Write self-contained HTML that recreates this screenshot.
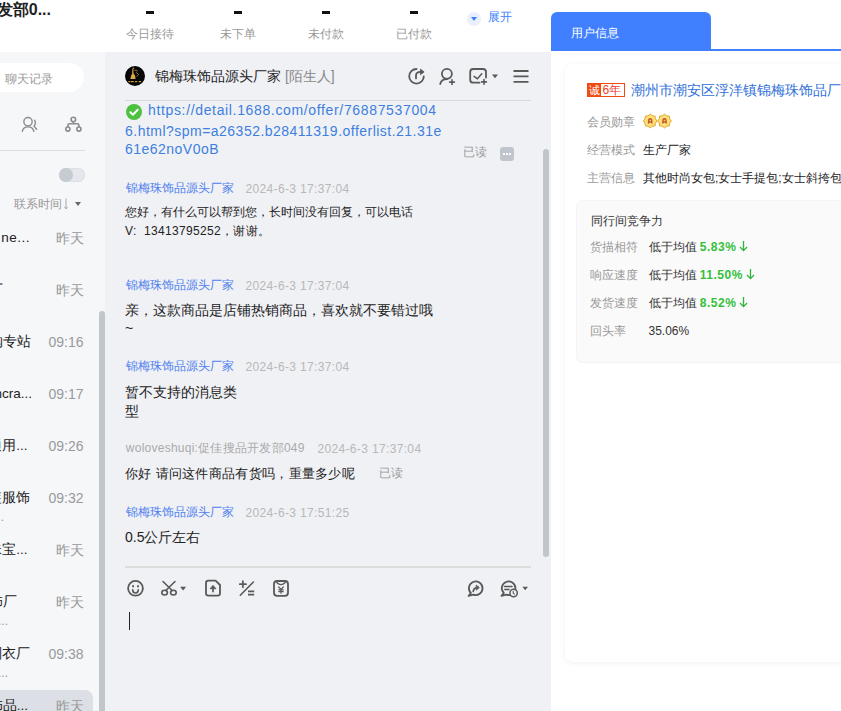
<!DOCTYPE html>
<html><head><meta charset="utf-8">
<style>
*{margin:0;padding:0;box-sizing:border-box}
html,body{width:841px;height:711px;overflow:hidden;background:#fff;font-family:"Liberation Sans",sans-serif;color:#333}
.a{position:absolute;white-space:nowrap}
#hdr{position:absolute;left:0;top:0;width:841px;height:52px;background:#fff}
#left{position:absolute;left:0;top:52px;width:105px;height:659px;background:#f6f7f9;overflow:hidden}
#mid{position:absolute;left:105px;top:52px;width:446px;height:659px;background:#f0f1f5;overflow:hidden}
#right{position:absolute;left:551px;top:51px;width:290px;height:660px;background:#fff;overflow:hidden}
.dash{position:absolute;width:8px;height:3px;background:#111;top:11px}
.lbl{font-size:12px;color:#999;line-height:16px;top:26px;text-align:center;width:60px}
.sender{font-size:12px;color:#4f80ee;line-height:16px}
.time{font-size:12px;color:#b8b8b8;line-height:16px;letter-spacing:.35px;margin-top:1px}
.msg{font-size:12px;color:#222;line-height:18px}
.msg14{font-size:14px;color:#222;line-height:20px}
.msg13{font-size:13px;color:#222;line-height:20px}
.url{font-size:14px;line-height:20px;color:#3d7fe0;letter-spacing:.48px}
.rl{left:36.4px;font-size:12px;line-height:16px;color:#999}
.rv{left:92px;font-size:12px;line-height:16px;color:#222}
.cl{left:39.3px;font-size:12px;line-height:16px;color:#999}
.cv{left:97.5px;font-size:12px;line-height:16px;color:#333}
.cv b{color:#33c13b;letter-spacing:.5px}
.item-t{font-size:14px;color:#999;line-height:18px}
.item-n{font-size:13.5px;color:#222;line-height:18px}
</style></head><body>
<div id="hdr">
  <div class="a" style="right:790px;top:0;font-size:16px;font-weight:bold;line-height:20px;color:#222">开发部0...</div>
  <div class="dash" style="left:146px"></div>
  <div class="a lbl" style="left:120px">今日接待</div>
  <div class="dash" style="left:234px"></div>
  <div class="a lbl" style="left:208px">未下单</div>
  <div class="dash" style="left:322px"></div>
  <div class="a lbl" style="left:296px">未付款</div>
  <div class="dash" style="left:410px"></div>
  <div class="a lbl" style="left:384px">已付款</div>
  <div class="a" style="left:467px;top:12px;width:14px;height:14px;border-radius:7px;background:#e9effc"></div>
  <div class="a" style="left:471px;top:17px;width:0;height:0;border-left:3px solid transparent;border-right:3px solid transparent;border-top:4px solid #4080ff"></div>
  <div class="a" style="left:488px;top:9px;font-size:12px;line-height:16px;color:#4080ff">展开</div>
  <div class="a" style="left:551px;top:12px;width:160px;height:39px;background:#4080ff;border-radius:6px 6px 0 0"></div>
  <div class="a" style="left:571px;top:25px;font-size:12px;line-height:16px;color:#fff">用户信息</div>
  <div class="a" style="left:711px;top:49px;width:130px;height:2px;background:#4080ff"></div>
</div>

<div id="left">
  <div class="a" style="left:-40px;top:11px;width:124px;height:29px;border-radius:15px;background:#fff"></div>
  <div class="a" style="left:5px;top:19px;font-size:12px;line-height:16px;color:#999">聊天记录</div>
  <div class="a" style="left:0;top:98px;width:85px;height:1px;background:#dcdde0"></div>
  <div class="a" style="left:59px;top:116px;width:26px;height:14px;border-radius:7px;background:#e5e7ec;box-shadow:inset 0 0 0 1px #dde0e5"></div>
  <div class="a" style="left:59px;top:116px;width:14px;height:14px;border-radius:7px;background:#c6cad1"></div>
  <div class="a" style="left:14px;top:144px;font-size:12px;line-height:16px;color:#999">联系时间</div>
  <svg class="a" style="left:62.6px;top:145.6px" width="6" height="12" viewBox="0 0 6 12"><path d="M3 .5v10.5M1.3 8.8l1.7 2 1.7-2" stroke="#a3a3a3" stroke-width=".95" fill="none"/></svg>
  <div class="a" style="left:75px;top:149.7px;width:0;height:0;border-left:3px solid transparent;border-right:3px solid transparent;border-top:4px solid #666"></div>
  <div class="a" style="left:-20px;top:638px;width:113px;height:60px;border-radius:8px;background:#dcdfe5"></div>
  <div class="a item-n" style="right:75px;top:177px;letter-spacing:.5px">采购商 ne...</div>
  <div class="a item-t" style="right:21.5px;top:177px">昨天</div>
  <div class="a item-n" style="right:102.0px;top:229px">丅</div>
  <div class="a item-t" style="right:21.5px;top:229px">昨天</div>
  <div class="a item-n" style="right:74.4px;top:281px">中国采购专站</div>
  <div class="a item-t" style="right:21.5px;top:281px">09:16</div>
  <div class="a item-n" style="right:73.0px;top:333px">ancra...</div>
  <div class="a item-t" style="right:21.5px;top:333px">09:17</div>
  <div class="a item-n" style="right:77.6px;top:385px">通用...</div>
  <div class="a item-t" style="right:21.5px;top:385px">09:26</div>
  <div class="a item-n" style="right:74.8px;top:437px">服装服饰</div>
  <div class="a item-t" style="right:21.5px;top:437px">09:32</div>
  <div class="a" style="right:101px;top:458px;font-size:12px;line-height:14px;color:#999">...</div>
  <div class="a item-n" style="right:77.6px;top:489px">珠宝...</div>
  <div class="a item-t" style="right:21.5px;top:489px">昨天</div>
  <div class="a item-n" style="right:88.1px;top:541px">饰厂</div>
  <div class="a item-t" style="right:21.5px;top:541px">昨天</div>
  <div class="a" style="right:97px;top:562px;font-size:12px;line-height:14px;color:#999">...</div>
  <div class="a item-n" style="right:75.0px;top:593px">制衣厂</div>
  <div class="a item-t" style="right:21.5px;top:593px">09:38</div>
  <div class="a" style="right:97px;top:614px;font-size:12px;line-height:14px;color:#999">...</div>
  <div class="a item-n" style="right:77.0px;top:645px">饰品...</div>
  <div class="a item-t" style="right:21.5px;top:645px">昨天</div>
  <div class="a" style="left:99px;top:259px;width:6px;height:420px;border-radius:3px;background:#c1c5cc"></div>
</div>

<div id="mid">
  <div class="a" style="left:20px;top:14px;width:20px;height:20px;border-radius:10px;background:#050505"></div>
  <svg class="a" style="left:20px;top:14px" width="20" height="20" viewBox="0 0 20 20"><path d="M7.4 2.6c.4-.3.9-.2 1 .2L8.5 7.4 10 9.6l.6 3.4H5.4l.7-3.6 1-1.4z" fill="#d8a845"/><circle cx="8.6" cy="2.2" r=".6" fill="#e0b552"/><path d="M9.6 4.3c1.2.2 2.3-.4 2.6.5.3.9-1.3 1.3-.7 2.1.6.8 2.2.6 2 1.8-.2 1-1.4 1.6-2.6 1.7" stroke="#d8a845" stroke-width=".9" fill="none" stroke-dasharray="1.1 .7"/><path d="M3.4 15.7h1.8M5.8 15.7h3M10 15.7h2.2M13.6 15.7h2.6" stroke="#c9993c" stroke-width="1.2"/></svg>
  <div class="a" style="left:50px;top:15px;font-size:14px;line-height:18px;color:#222">锦梅珠饰品源头厂家 <span style="color:#888">[陌生人]</span></div>
  <div class="a" style="left:20px;top:48px;width:406px;height:1px;background:#d9d9dc"></div>
  <svg class="a" style="left:21px;top:52px" width="16" height="16" viewBox="0 0 16 16"><circle cx="8" cy="8" r="8" fill="#4cc13f"/><path d="M4.3 8.2l2.6 2.5 4.8-4.9" stroke="#fff" stroke-width="2" fill="none" stroke-linecap="round" stroke-linejoin="round"/></svg>
  <div class="a url" style="left:43px;top:48px;letter-spacing:.65px">https://detail.1688.com/offer/76887537004</div>
  <div class="a url" style="left:20px;top:68.8px">6.html?spm=a26352.b28411319.offerlist.21.31e</div>
  <div class="a url" style="left:20px;top:87.4px">61e62noV0oB</div>
  <div class="a" style="left:358px;top:92px;font-size:12px;line-height:16px;color:#999">已读</div>
  <div class="a" style="left:395px;top:95px;width:14px;height:14px;border-radius:3px;background:#c0c4cc"></div>
  <div class="a" style="left:398px;top:101px;width:2px;height:2px;background:#fff"></div>
  <div class="a" style="left:401px;top:101px;width:2px;height:2px;background:#fff"></div>
  <div class="a" style="left:404px;top:101px;width:2px;height:2px;background:#fff"></div>

  <div class="a sender" style="left:20.8px;top:128.3px">锦梅珠饰品源头厂家</div>
  <div class="a time" style="left:140.5px;top:128.3px">2024-6-3 17:37:04</div>
  <div class="a msg" style="left:20px;top:151.4px">您好，有什么可以帮到您，长时间没有回复，可以电话</div>
  <div class="a msg" style="left:20px;top:169.6px;letter-spacing:.33px">V:&nbsp; 13413795252，谢谢。</div>

  <div class="a sender" style="left:20.8px;top:225.2px">锦梅珠饰品源头厂家</div>
  <div class="a time" style="left:140.5px;top:225.2px">2024-6-3 17:37:04</div>
  <div class="a msg14" style="left:20px;top:248px">亲，这款商品是店铺热销商品，喜欢就不要错过哦</div>
  <div class="a msg14" style="left:20px;top:266px">~</div>

  <div class="a sender" style="left:20.8px;top:306.2px">锦梅珠饰品源头厂家</div>
  <div class="a time" style="left:140.5px;top:306.2px">2024-6-3 17:37:04</div>
  <div class="a msg14" style="left:20px;top:329.6px">暂不支持的消息类</div>
  <div class="a msg14" style="left:20px;top:349px">型</div>

  <div class="a time" style="left:20.8px;top:388.2px;color:#aaa;letter-spacing:.25px;margin-top:0">woloveshuqi:促佳搜品开发部049</div>
  <div class="a time" style="left:212.4px;top:388.2px">2024-6-3 17:37:04</div>
  <div class="a msg13" style="left:20px;top:411.9px;letter-spacing:.3px">你好 请问这件商品有货吗，重量多少呢</div>
  <div class="a" style="left:273.9px;top:413.3px;font-size:12px;line-height:16px;color:#999">已读</div>

  <div class="a sender" style="left:20.8px;top:451.7px">锦梅珠饰品源头厂家</div>
  <div class="a time" style="left:140.5px;top:451.7px">2024-6-3 17:51:25</div>
  <div class="a msg14" style="left:20px;top:474.8px">0.5公斤左右</div>

  <div class="a" style="left:438px;top:97px;width:6px;height:408px;border-radius:3px;background:#c1c5cc"></div>
  <div class="a" style="left:20px;top:514px;width:406px;height:2px;background:#dcdcdc"></div>
  <div class="a" style="left:24px;top:560px;width:1px;height:18px;background:#222"></div>
</div>

<div id="right">
  <div class="a" style="left:13.5px;top:12.6px;width:320px;height:598px;border-radius:8px;background:#fff;box-shadow:0 1px 6px rgba(0,0,0,.06)"></div>
  <div class="a" style="left:36px;top:32px;width:13.5px;height:14px;background:#f04b12"></div>
  <div class="a" style="left:37.5px;top:32px;font-size:10.5px;line-height:14px;color:#fff">诚</div>
  <div class="a" style="left:49px;top:32px;width:25px;height:14px;border:1px solid #f04b12;border-left:none"></div>
  <div class="a" style="left:51.5px;top:31px;font-size:12px;line-height:16px;color:#f0402a">6年</div>
  <div class="a" style="left:79.5px;top:29.7px;font-size:14px;line-height:18px;color:#2f70d8">潮州市潮安区浮洋镇锦梅珠饰品厂</div>
  <div class="a rl" style="top:63px">会员勋章</div>
  <svg class="a" style="left:91px;top:62px" width="32" height="16" viewBox="0 0 32 16"><polygon points="8.20,1.10 6.06,2.83 3.32,3.12 3.03,5.86 1.30,8.00 3.03,10.14 3.32,12.88 6.06,13.17 8.20,14.90 10.34,13.17 13.08,12.88 13.37,10.14 15.10,8.00 13.37,5.86 13.08,3.12 10.34,2.83" fill="#fde27b" stroke="#e3a52a" stroke-width="1"/><path d="M5.8999999999999995 10.9V7.4a2.3 2.3 0 0 1 4.6 0V10.9l-2.3-1.3z" fill="#c9552b"/><rect x="7.3999999999999995" y="6.8" width="1.6" height="1.5" fill="#f7d26a"/><polygon points="22.50,1.10 20.36,2.83 17.62,3.12 17.33,5.86 15.60,8.00 17.33,10.14 17.62,12.88 20.36,13.17 22.50,14.90 24.64,13.17 27.38,12.88 27.67,10.14 29.40,8.00 27.67,5.86 27.38,3.12 24.64,2.83" fill="#fde27b" stroke="#e3a52a" stroke-width="1"/><path d="M20.2 10.9V7.4a2.3 2.3 0 0 1 4.6 0V10.9l-2.3-1.3z" fill="#c9552b"/><rect x="21.7" y="6.8" width="1.6" height="1.5" fill="#f7d26a"/></svg>
  <div class="a rl" style="top:91px">经营模式</div>
  <div class="a rv" style="top:91px">生产厂家</div>
  <div class="a rl" style="top:119px">主营信息</div>
  <div class="a rv" style="top:119px">其他时尚女包;女士手提包;女士斜挎包</div>
  <div class="a" style="left:26.3px;top:149.8px;width:300px;height:161px;border-radius:6px;background:#fafafa;box-shadow:0 0 0 1px #f4f4f5"></div>
  <div class="a" style="left:39.6px;top:161.7px;font-size:12px;line-height:16px;color:#333">同行间竞争力</div>
  <div class="a cl" style="top:187.7px">货描相符</div>
  <div class="a cv" style="top:187.7px">低于均值 <b>5.83%</b><svg width="9" height="12" viewBox="0 0 9 12" style="vertical-align:-1px;margin-left:3px"><path d="M4.5 1v9.5M1 7l3.5 3.6L8 7" stroke="#2fb33a" stroke-width="1.3" fill="none"/></svg></div>
  <div class="a cl" style="top:215.5px">响应速度</div>
  <div class="a cv" style="top:215.5px">低于均值 <b>11.50%</b><svg width="9" height="12" viewBox="0 0 9 12" style="vertical-align:-1px;margin-left:3px"><path d="M4.5 1v9.5M1 7l3.5 3.6L8 7" stroke="#2fb33a" stroke-width="1.3" fill="none"/></svg></div>
  <div class="a cl" style="top:243.8px">发货速度</div>
  <div class="a cv" style="top:243.8px">低于均值 <b>8.52%</b><svg width="9" height="12" viewBox="0 0 9 12" style="vertical-align:-1px;margin-left:3px"><path d="M4.5 1v9.5M1 7l3.5 3.6L8 7" stroke="#2fb33a" stroke-width="1.3" fill="none"/></svg></div>
  <div class="a cl" style="top:271.6px">回头率</div>
  <div class="a cv" style="top:271.6px">35.06%</div>
</div>
<svg class="a" style="left:0;top:0" width="841" height="711" viewBox="0 0 841 711" fill="none" stroke="#595959" stroke-width="1.8" stroke-linecap="round" stroke-linejoin="round">
  <!-- left person -->
  <g stroke="#8c8c8c" stroke-width="1.4">
  <circle cx="28" cy="121.7" r="4.15"/>
  <path d="M22.3 131.3Q23.2 126.9 28.1 126.9Q33 126.9 33.8 131.3"/>
  <path d="M34.5 120.2Q36.6 123.1 34 126.1L36.6 129.2"/>
  </g>
  <!-- left org -->
  <g stroke="#8c8c8c" stroke-width="1.6">
  <circle cx="73.35" cy="119.5" r="2.25"/>
  <circle cx="67.85" cy="129.1" r="2.05"/>
  <circle cx="78.9" cy="129.1" r="2.05"/>
  <path d="M73.35 121.8v2M67.85 127v-1.6q0-1.6 1.6-1.6h7.9q1.6 0 1.6 1.6v1.6" stroke-linecap="butt"/>
  </g>
  <!-- refresh -->
  <path d="M416.5 69A7.3 7.3 0 1 0 423.8 76.3"/>
  <path d="M416 78.4V75.6Q416 71.9 420.6 71.9"/>
  <path d="M420.8 69.4L424.1 71.9L420.8 74.4Z" fill="#595959" stroke-width=".9"/>
  <!-- user add -->
  <circle cx="446.9" cy="73.8" r="5"/>
  <path d="M440.2 84Q441.5 79.2 446.9 79.2"/>
  <path d="M452 79.7v4.8M449.6 82.1h4.8" stroke-width="1.6"/>
  <!-- checkbox add -->
  <path d="M486 77.6V72a3 3 0 0 0-3-3h-9.8a3 3 0 0 0-3 3v7.7a3 3 0 0 0 3 3h6.3"/>
  <path d="M474.1 76.4l3.3 2.4 4.4-5" stroke-width="1.5"/>
  <path d="M484 79.5v4.8M481.6 81.9h4.8" stroke-width="1.6"/>
  <path d="M492 74.6h6l-3 3.7z" fill="#595959" stroke="none"/>
  <!-- hamburger -->
  <path d="M513.5 71h15M513.5 76.4h15M513.5 81.9h15" stroke-linecap="butt"/>

  <!-- smiley -->
  <circle cx="135.5" cy="588.3" r="7.4"/>
  <path d="M133.1 586v.5M138 586v.5" stroke-width="1.9"/>
  <path d="M132.7 589.8q0 3.2 2.8 3.2t2.8-3.2" stroke-width="1.6"/>
  <!-- scissors -->
  <ellipse cx="164.6" cy="592.6" rx="2.8" ry="2.4" stroke-width="1.6"/>
  <ellipse cx="173.4" cy="592.6" rx="2.8" ry="2.4" stroke-width="1.6"/>
  <path d="M163 581.5l9.2 9M175 581.5l-9.2 9" stroke-width="1.6"/>
  <path d="M180.1 586.8h6l-3 3.7z" fill="#595959" stroke="none"/>
  <!-- upload doc -->
  <path d="M206 583a2.4 2.4 0 0 1 2.4-2.4h7.2l4.4 4.4v8.2a2.4 2.4 0 0 1-2.4 2.4h-9.2a2.4 2.4 0 0 1-2.4-2.4z"/>
  <path d="M213 591.6v-4" stroke-width="1.7"/><path d="M210.4 588.4l2.6-3 2.6 3z" fill="#595959" stroke-width="1"/>
  <!-- plus slash equals -->
  <path d="M239.8 584.2h6.2M242.9 581.1v6.2" stroke-width="1.7"/>
  <path d="M253.4 582L240.3 595.2" stroke-width="1.6"/>
  <path d="M248 591.4h6.2M248 594.6h6.2" stroke-width="1.9" stroke-linecap="butt"/>
  <!-- yen doc -->
  <rect x="274" y="581" width="14" height="14.8" rx="3"/>
  <path d="M276.8 582.4q4.2 4.4 8.4 0" stroke-width="1.4"/>
  <path d="M278.7 587l2.3 2.4 2.3-2.4M281 589.4v3.8M278.8 589.8h4.4M278.8 591.6h4.4" stroke-width="1.2"/>
  <!-- forward chat -->
  <path d="M470.9 593A6.8 6.8 0 1 1 473.4 594.6L468.6 595.9Z"/>
  <path d="M473.2 591.3q.5-3.4 3.7-3.7" stroke-width="1.7"/>
  <path d="M476.5 585.3l2.8 2.3-2.8 2.3z" fill="#595959" stroke-width=".9"/>
  <!-- chat clock -->
  <path d="M503.8 593A6.8 6.8 0 1 1 506.3 594.6L501.5 595.9Z"/>
  <path d="M504.6 586.6h7.4M504.8 589.6h4.2" stroke-width="1.5"/>
  <circle cx="513.6" cy="593" r="3.7" stroke-width="1.5" fill="#f0f1f5"/>
  <path d="M513.2 591.4v1.8l1.2 1" stroke-width="1.1"/>
  <path d="M522.4 586.8h5.6l-2.8 3.5z" fill="#595959" stroke="none"/>
</svg>
</body></html>
